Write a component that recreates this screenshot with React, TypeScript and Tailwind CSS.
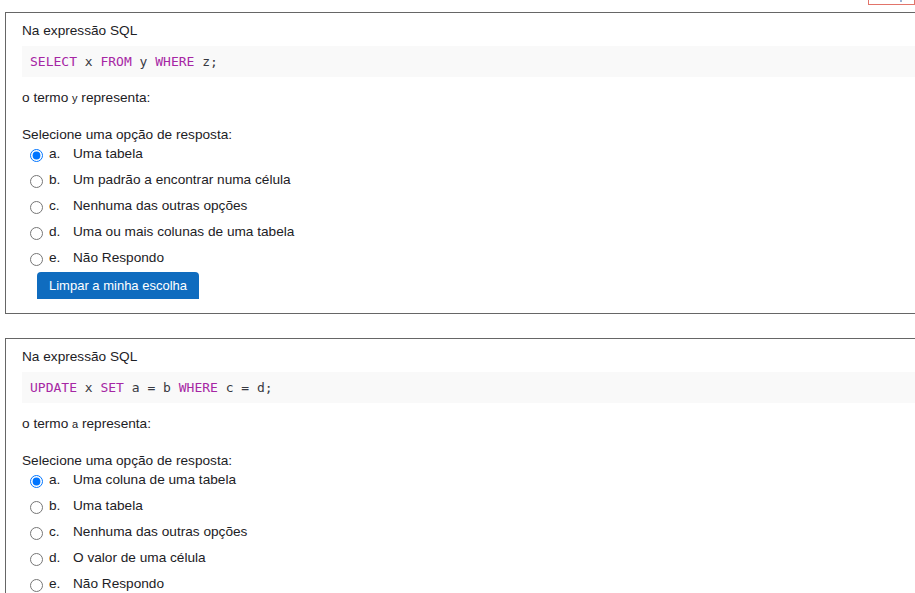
const questions = [
  {
    code: [
      { t: "SELECT", k: true },
      { t: " x " },
      { t: "FROM", k: true },
      { t: " y " },
      { t: "WHERE", k: true },
      { t: " z;" },
    ],
    term: "y",
    options: [
      "Uma tabela",
      "Um padrão a encontrar numa célula",
      "Nenhuma das outras opções",
      "Uma ou mais colunas de uma tabela",
      "Não Respondo",
    ],
  },
  {
    code: [
      { t: "UPDATE", k: true },
      { t: " x " },
      { t: "SET", k: true },
      { t: " a = b " },
      { t: "WHERE", k: true },
      { t: " c = d;" },
    ],
    term: "a",
    options: [
      "Uma coluna de uma tabela",
      "Uma tabela",
      "Nenhuma das outras opções",
      "O valor de uma célula",
      "Não Respondo",
    ],
  },
];

const letters = ["a.", "b.", "c.", "d.", "e."];

function Question({ q }: { q: (typeof questions)[number] }) {
  return (
    <div className="ml-[5px] border-y border-l border-[#666] pl-4 pt-[8px] pb-[14px] text-[13.65px] leading-[20px] text-[#1d2125]">
      <p>Na expressão SQL</p>
      <pre className="mt-[5px] bg-[#f9f9f9] px-2 py-[6px] font-['DejaVu_Sans_Mono',monospace] text-[13px] leading-[19px] text-[#383a42]">
        {q.code.map((c, i) =>
          c.k ? (
            <span key={i} className="text-[#a626a4]">
              {c.t}
            </span>
          ) : (
            <span key={i}>{c.t}</span>
          )
        )}
      </pre>
      <p className="mt-[11px]">
        o termo <span className="text-[11px]">{q.term}</span> representa:
      </p>
      <p className="mt-[17px]">Selecione uma opção de resposta:</p>
      <div className="-mt-[4px] pl-2">
        {q.options.map((o, i) => (
          <label key={i} className="flex h-[26px] items-center">
            <input
              type="radio"
              name={q.term}
              defaultChecked={i === 0}
              className="mt-[2px] h-[13px] w-[13px]"
            />
            <span className="ml-[6px] w-[24px]">{letters[i]}</span>
            <span>{o}</span>
          </label>
        ))}
      </div>
      <div className="mt-[1px] pl-[15px]">
        <button className="h-[27px] rounded-t-[4px] bg-[#0f6cbf] px-[12px] text-[13px] text-white">
          Limpar a minha escolha
        </button>
      </div>
    </div>
  );
}

export default function App() {
  return (
    <div className="min-h-[593px] overflow-hidden bg-white font-['Liberation_Sans',Arial,sans-serif]">
      <div className="flex h-[5px] justify-end">
        <div className="flex w-[47px] justify-end border border-t-0 border-[#e2746a] pr-[12px]">
          <div className="h-[2px] w-[2px] bg-[#9bb3d6]" />
        </div>
      </div>
      <div className="mt-[7px]">
        <Question q={questions[0]} />
      </div>
      <div className="mt-[24px]">
        <Question q={questions[1]} />
      </div>
    </div>
  );
}
